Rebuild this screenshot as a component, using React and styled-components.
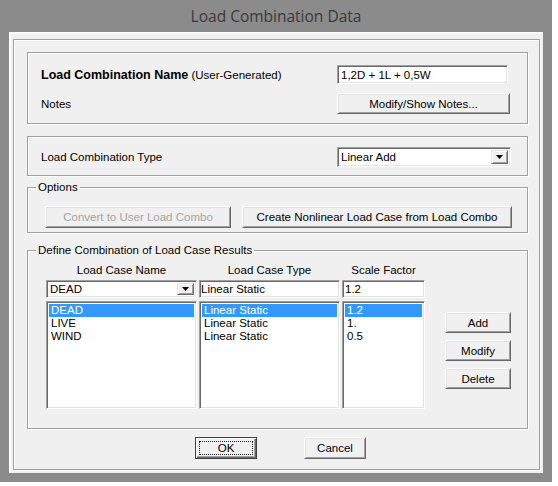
import React from 'react';
import styled, { createGlobalStyle, css } from 'styled-components';

const Global = createGlobalStyle`
  html, body { margin: 0; padding: 0; background: #ffffff; }
  body {
    font-family: "Liberation Sans", Arial, sans-serif;
    font-size: 11.5px;
    color: #000;
  }
  * { box-sizing: border-box; }
`;

const Window = styled.div`
  width: 552px;
  height: 482px;
  background: #8b8b8b;
  padding: 0 9px 9px;
  display: flex;
  flex-direction: column;
`;

const TitleBar = styled.div`
  height: 32px;
  flex: none;
  display: flex;
  align-items: center;
  justify-content: center;
  font-family: "Open Sans", "Noto Sans", sans-serif;
  font-size: 15.5px;
  color: #3a3a3a;
  padding-bottom: 1px;
`;

const Client = styled.div`
  flex: 1;
  display: flex;
  background: #f0f0f0;
  box-shadow: inset 1px 1px 0 #ffffff, inset 2px 2px 0 #fafafa;
  padding: 7px 3px 3px 4px;
`;

const Frame = styled.div`
  flex: 1;
  display: flex;
  flex-direction: column;
  border: 1px solid #a0a0a0;
  box-shadow: inset 1px 1px 0 #ffffff, 1px 1px 0 #ffffff;
  padding: 12px 11px 10px 13px;
`;

const Group = styled.div`
  height: ${(p) => p.$h}px;
  margin-top: ${(p) => p.$mt || 0}px;
  flex: none;
  border: 1px solid #a0a0a0;
  box-shadow: inset 1px 1px 0 #ffffff, 1px 1px 0 #ffffff;
`;

const FieldGroup = styled.fieldset`
  height: ${(p) => p.$h}px;
  margin: ${(p) => p.$mt || 0}px 0 0 0;
  padding: 0;
  flex: none;
  border: 1px solid #a0a0a0;
  box-shadow: inset 1px 1px 0 #ffffff, 1px 1px 0 #ffffff;
  min-width: 0;
`;

const Legend = styled.legend`
  margin-left: 8px;
  padding: 0 2px;
  line-height: 14px;
  font-size: 11.5px;
`;

const FormGrid = styled.div`
  display: grid;
  grid-template-columns: 1fr 174px;
  row-gap: ${(p) => p.$rowGap || 0}px;
  align-items: center;
  padding: ${(p) => p.$pt}px 16px 0 13px;
`;

const Label = styled.span`
  white-space: nowrap;
`;

const Strong = styled.b`
  font-size: 12.5px;
  font-weight: bold;
`;

const sunken = css`
  background: #ffffff;
  border: 1px solid;
  border-color: #a0a0a0 #ffffff #ffffff #a0a0a0;
  box-shadow: inset 1px 1px 0 #696969, inset -1px -1px 0 #e3e3e3;
`;

const TextBox = styled.div`
  ${sunken};
  width: ${(p) => (p.$w ? `${p.$w}px` : 'auto')};
  height: ${(p) => p.$h || 19}px;
  padding: 0 3px 0 ${(p) => (p.$pl != null ? p.$pl : 3)}px;
  display: flex;
  align-items: center;
  white-space: nowrap;
  overflow: hidden;
`;

const Combo = styled.div`
  ${sunken};
  width: ${(p) => (p.$w ? `${p.$w}px` : 'auto')};
  height: ${(p) => p.$h || 19}px;
  padding: 2px 2px 2px 3px;
  display: flex;
  align-items: center;
  justify-content: space-between;
`;

const ComboText = styled.span`
  white-space: nowrap;
`;

const ArrowBtn = styled.div`
  width: 17px;
  height: 100%;
  background: #f0f0f0;
  border: 1px solid;
  border-color: #e3e3e3 #696969 #696969 #e3e3e3;
  box-shadow: inset 1px 1px 0 #ffffff, inset -1px -1px 0 #a0a0a0;
  display: flex;
  align-items: center;
  justify-content: center;
`;

const Arrow = () => (
  <svg width="7" height="4" viewBox="0 0 7 4">
    <path d="M0 0 H7 L3.5 4 Z" fill="#000" />
  </svg>
);

const Button = styled.button`
  position: relative;
  width: ${(p) => p.$w}px;
  height: ${(p) => p.$h || 21}px;
  padding: 0;
  margin: 0;
  font-family: "Liberation Sans", Arial, sans-serif;
  font-size: 11.5px;
  color: ${(p) => (p.disabled ? '#a3a3a3' : '#000')};
  background: #f0f0f0;
  border: 1px solid;
  border-color: #ffffff #696969 #696969 #ffffff;
  box-shadow: inset 1px 1px 0 #e3e3e3, inset -1px -1px 0 #a0a0a0;
  ${(p) =>
    p.$default &&
    css`
      border-color: #404040;
      box-shadow: inset 1px 1px 0 #ffffff, inset -1px -1px 0 #696969, inset -2px -2px 0 #a0a0a0;
      &::after {
        content: '';
        position: absolute;
        inset: 3px;
        border: 1px dotted #202020;
      }
    `}
`;

const OptionsRow = styled.div`
  display: flex;
  gap: 11px;
  padding: 12px 0 0 17px;
`;

const DefineRow = styled.div`
  display: flex;
  gap: 2px;
  padding: 6px 0 0 18px;
`;

const Column = styled.div`
  width: ${(p) => p.$w}px;
  display: flex;
  flex-direction: column;
  gap: 3px;
`;

const ColHead = styled.div`
  height: 14px;
  line-height: 14px;
  text-align: center;
  white-space: nowrap;
`;

const ListBox = styled.div`
  ${sunken};
  height: 108px;
  padding: 2px;
  display: flex;
  flex-direction: column;
`;

const ListItem = styled.div`
  height: 13px;
  line-height: 13px;
  padding-left: 2px;
  white-space: nowrap;
  background: ${(p) => (p.$selected ? '#3399ff' : 'transparent')};
  color: ${(p) => (p.$selected ? '#ffffff' : '#000')};
`;

const ButtonCol = styled.div`
  display: flex;
  flex-direction: column;
  gap: 7px;
  padding-top: 49px;
  margin-left: 18px;
`;

const BottomRow = styled.div`
  margin-top: 8px;
  display: flex;
  justify-content: center;
  gap: 47px;
  padding-left: 6px;
`;

const rows = [
  { name: 'DEAD', type: 'Linear Static', sf: '1.2' },
  { name: 'LIVE', type: 'Linear Static', sf: '1.' },
  { name: 'WIND', type: 'Linear Static', sf: '0.5' },
];

export default function App() {
  return (
    <>
      <Global />
      <Window>
        <TitleBar>Load Combination Data</TitleBar>
        <Client>
          <Frame>
            <Group $h={72}>
              <FormGrid $pt={12} $rowGap={9}>
                <Label>
                  <Strong>Load Combination Name</Strong> (User-Generated)
                </Label>
                <TextBox $w={171}>1,2D + 1L + 0,5W</TextBox>
                <Label>Notes</Label>
                <Button $w={173}>Modify/Show Notes...</Button>
              </FormGrid>
            </Group>

            <Group $h={40} $mt={12}>
              <FormGrid $pt={10}>
                <Label>Load Combination Type</Label>
                <Combo $w={174} $h={20}>
                  <ComboText>Linear Add</ComboText>
                  <ArrowBtn>
                    <Arrow />
                  </ArrowBtn>
                </Combo>
              </FormGrid>
            </Group>

            <FieldGroup $h={53} $mt={4}>
              <Legend>Options</Legend>
              <OptionsRow>
                <Button $w={186} $h={22} disabled>
                  Convert to User Load Combo
                </Button>
                <Button $w={270} $h={22}>
                  Create Nonlinear Load Case from Load Combo
                </Button>
              </OptionsRow>
            </FieldGroup>

            <FieldGroup $h={186} $mt={10}>
              <Legend>Define Combination of Load Case Results</Legend>
              <DefineRow>
                <Column $w={151}>
                  <ColHead>Load Case Name</ColHead>
                  <Combo $h={18}>
                    <ComboText>DEAD</ComboText>
                    <ArrowBtn>
                      <Arrow />
                    </ArrowBtn>
                  </Combo>
                  <ListBox>
                    {rows.map((r, i) => (
                      <ListItem key={r.name} $selected={i === 0}>
                        {r.name}
                      </ListItem>
                    ))}
                  </ListBox>
                </Column>
                <Column $w={141}>
                  <ColHead>Load Case Type</ColHead>
                  <TextBox $h={18} $pl={1}>
                    Linear Static
                  </TextBox>
                  <ListBox>
                    {rows.map((r, i) => (
                      <ListItem key={r.name} $selected={i === 0}>
                        {r.type}
                      </ListItem>
                    ))}
                  </ListBox>
                </Column>
                <Column $w={83}>
                  <ColHead>Scale Factor</ColHead>
                  <TextBox $h={18} $pl={2}>
                    1.2
                  </TextBox>
                  <ListBox>
                    {rows.map((r, i) => (
                      <ListItem key={r.name} $selected={i === 0}>
                        {r.sf}
                      </ListItem>
                    ))}
                  </ListBox>
                </Column>
                <ButtonCol>
                  <Button $w={66}>Add</Button>
                  <Button $w={66}>Modify</Button>
                  <Button $w={66}>Delete</Button>
                </ButtonCol>
              </DefineRow>
            </FieldGroup>

            <BottomRow>
              <Button $w={62} $h={22} $default>
                OK
              </Button>
              <Button $w={62} $h={22}>
                Cancel
              </Button>
            </BottomRow>
          </Frame>
        </Client>
      </Window>
    </>
  );
}
